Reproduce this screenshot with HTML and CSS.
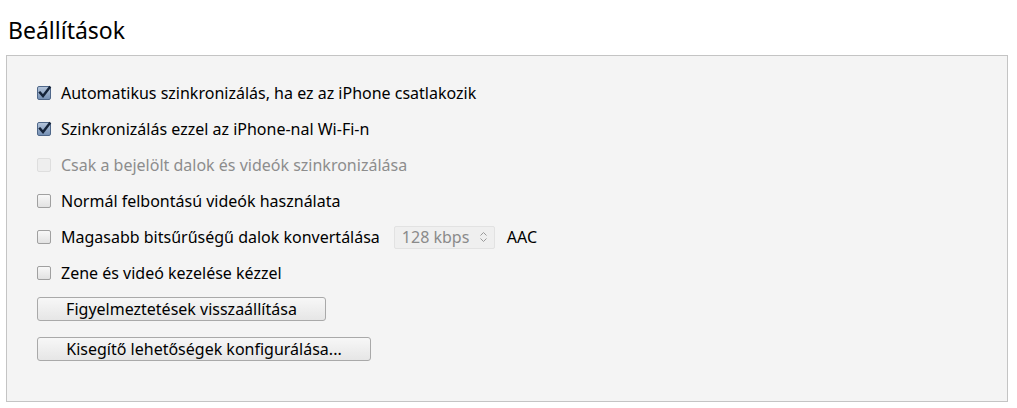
FILE: index.html
```html
<!DOCTYPE html>
<html lang="hu">
<head>
<meta charset="utf-8">
<link rel="stylesheet" href="styles.css">
</head>
<body>
<h1 class="title">Beállítások</h1>
<div class="panel">
  <div class="row"><span class="cb checked"><svg viewBox="0 0 15 15" width="15" height="15"><path d="M3 7.6 L6 11 L12.6 2.4" fill="none" stroke="#15243a" stroke-width="2.4" stroke-linecap="square"/></svg></span><span class="label">Automatikus szinkronizálás, ha ez az iPhone csatlakozik</span></div>
  <div class="row"><span class="cb checked"><svg viewBox="0 0 15 15" width="15" height="15"><path d="M3 7.6 L6 11 L12.6 2.4" fill="none" stroke="#15243a" stroke-width="2.4" stroke-linecap="square"/></svg></span><span class="label">Szinkronizálás ezzel az iPhone-nal Wi-Fi-n</span></div>
  <div class="row disabled"><span class="cb"></span><span class="label">Csak a bejelölt dalok és videók szinkronizálása</span></div>
  <div class="row"><span class="cb"></span><span class="label">Normál felbontású videók használata</span></div>
  <div class="row"><span class="cb"></span><span class="label">Magasabb bitsűrűségű dalok konvertálása</span>
    <span class="select"><span class="sel-text">128 kbps</span><svg class="arrows" viewBox="0 0 9 12" width="9" height="12"><path d="M1.5 4.5 L4.5 1.5 L7.5 4.5 M1.5 7.5 L4.5 10.5 L7.5 7.5" fill="none" stroke="#9a9a9a" stroke-width="1"/></svg></span>
    <span class="label aac">AAC</span></div>
  <div class="row"><span class="cb"></span><span class="label">Zene és videó kezelése kézzel</span></div>
  <div class="buttons">
    <button class="btn btn1">Figyelmeztetések visszaállítása</button>
    <button class="btn btn2">Kisegítő lehetőségek konfigurálása...</button>
  </div>
</div>
</body>
</html>
```
FILE: styles.css
```css
html, body {
  margin: 0;
  padding: 0;
  background: #ffffff;
}
body {
  font-family: "Noto Sans", "Open Sans", sans-serif;
  color: #000;
  width: 1017px;
  height: 408px;
  overflow: hidden;
}
.title {
  margin: 0;
  padding: 14px 0 0 8px;
  height: 55px;
  box-sizing: border-box;
  font-weight: 400;
  font-size: 23px;
  line-height: 32px;
}
.panel {
  margin: 0 0 0 6px;
  width: 1002px;
  height: 347px;
  box-sizing: border-box;
  border: 1px solid #c4c4c4;
  background: #f4f4f4;
  padding: 19px 0 0 30px;
}
.row {
  display: flex;
  align-items: center;
  height: 36px;
  font-size: 16px;
}
.cb {
  width: 14px;
  height: 14px;
  box-sizing: border-box;
  border: 1px solid #a0a0a0;
  border-radius: 2px;
  background: linear-gradient(#f8f8f8, #e2e2e2);
  margin-right: 10px;
  flex: none;
  position: relative;
}
.cb.checked {
  border-color: #4f6789;
  background: linear-gradient(#b3c4da, #7590b4);
}
.cb svg {
  position: absolute;
  left: -1px;
  top: -2px;
}
.disabled .cb {
  border-color: #dedede;
  background: #eeeeee;
}
.disabled .label {
  color: #8d8d8d;
}
.select {
  display: inline-flex;
  align-items: center;
  justify-content: space-between;
  margin-left: 14px;
  width: 101px;
  height: 23px;
  box-sizing: border-box;
  border: 1px solid #e2e2e2;
  border-radius: 2px;
  background: #efefef;
  padding: 0 6px 0 7px;
  color: #8a8a8a;
  font-size: 16px;
}
.aac {
  margin-left: 12px;
}
.buttons {
  display: flex;
  flex-direction: column;
  align-items: flex-start;
  gap: 16px;
  padding-top: 6px;
}
.btn {
  font-family: inherit;
  font-size: 16px;
  height: 24px;
  box-sizing: border-box;
  border: 1px solid #a9a9a9;
  border-radius: 3px;
  background: linear-gradient(#f7f7f7, #e6e6e6);
  color: #000;
  padding: 0;
  line-height: 20px;
  text-align: center;
}
.btn1 { width: 289px; }
.btn2 { width: 334px; }
```
